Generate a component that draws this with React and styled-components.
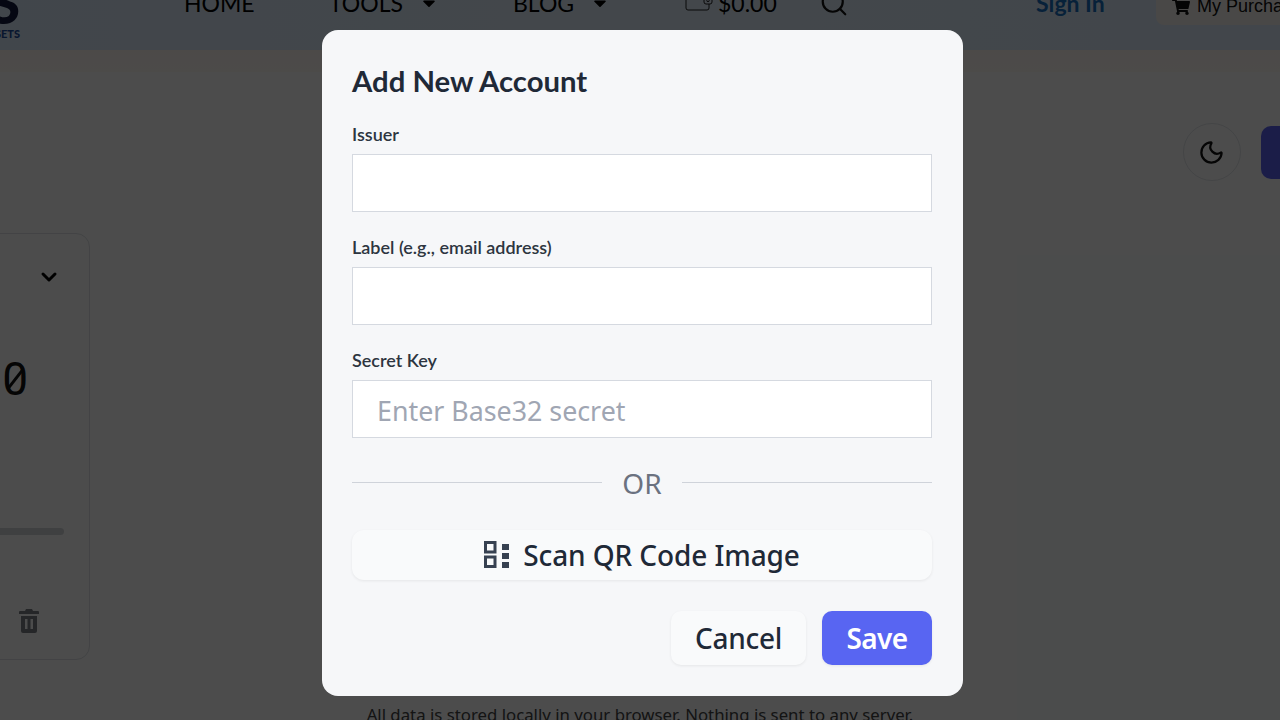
import React from "react";
import styled, { createGlobalStyle } from "styled-components";
import { Moon, Search, ChevronDown } from "lucide-react";
import { FaCaretDown, FaShoppingCart } from "react-icons/fa";

const GlobalStyle = createGlobalStyle`
  html, body {
    margin: 0;
    padding: 0;
    height: 100%;
    overflow: hidden;
  }
`;

const Page = styled.div`
  position: relative;
  width: 1280px;
  height: 720px;
  overflow: hidden;
  background: #ffffff;
  font-family: Lato, "Liberation Sans", sans-serif;
`;

const Header = styled.header`
  display: flex;
  align-items: flex-start;
  height: 50px;
  background: linear-gradient(90deg, #dbeafa, #e0effb 50%, #dcebfa);
`;

const Logo = styled.div`
  display: flex;
  flex-direction: column;
  align-items: flex-end;
  width: 20px;
  margin-top: -22px;
  font-weight: 900;
  color: #111a3c;
`;

const LogoLetter = styled.span`
  font-size: 56px;
  line-height: 50px;
`;

const LogoSub = styled.span`
  font-size: 11px;
  line-height: 12px;
  margin-top: 0;
  color: #1d4e9e;
  white-space: nowrap;
`;

const Nav = styled.nav`
  display: flex;
  align-items: center;
  margin: -10px 0 0 164px;
  height: 26px;
`;

const NavLink = styled.a`
  display: flex;
  align-items: center;
  gap: 16px;
  width: ${(p) => p.$width}px;
  font-size: 23px;
  line-height: 26px;
  color: #000;
`;

const Wallet = styled.div`
  display: flex;
  align-items: center;
  gap: 5px;
  width: 134px;
  font-size: 23px;
  line-height: 26px;
  color: #000;
`;

const SignIn = styled.a`
  flex: none;
  width: 120px;
  margin: -10px 0 0 187px;
  font-size: 23px;
  line-height: 26px;
  font-weight: 700;
  color: #1a6fc0;
  white-space: nowrap;
`;

const Purchases = styled.a`
  display: flex;
  align-items: center;
  gap: 7px;
  flex: none;
  width: 160px;
  height: 25px;
  padding: 0 0 12px 16px;
  box-sizing: border-box;
  border-radius: 0 0 0 8px;
  background: #f3f1ee;
  font-family: "Liberation Sans", sans-serif;
  font-size: 18px;
  color: #111;
  white-space: nowrap;
`;

const Strip = styled.div`
  height: 22px;
  background: linear-gradient(#fdf8f2, #fffaf5);
`;

const Main = styled.main`
  display: flex;
  flex-direction: column;
  background: #fdfeff;

  & > * {
    flex: none;
  }
`;

const Toolbar = styled.div`
  display: flex;
  align-items: center;
  gap: 20px;
  justify-content: flex-end;
  height: 60px;
  margin: 50px -81px 0 0;
`;

const ThemeButton = styled.button`
  display: flex;
  align-items: center;
  justify-content: center;
  width: 58px;
  height: 58px;
  padding: 0 2px 0 0;
  border: 1px solid #e4e6ea;
  border-radius: 50%;
  background: #fff;
  color: #111;
`;

const AddButton = styled.button`
  width: 100px;
  height: 53px;
  border: 0;
  border-radius: 10px;
  background: #5b63f0;
`;

const Card = styled.section`
  display: flex;
  flex-direction: column;
  align-items: flex-end;
  width: 121px;
  height: 427px;
  margin: 51px 0 0 -31px;
  padding: 31px 25px 0 0;
  box-sizing: border-box;
  border: 1px solid #dfe2e6;
  border-radius: 14px;
  background: #fff;
`;

const Chevron = styled(ChevronDown)`
  width: 24px;
  height: 24px;
  margin-right: 3px;
  color: #000;
`;

const Code = styled.div`
  position: relative;
  margin: 67px 36px 0 0;
  font-family: Roboto, sans-serif;
  font-size: 46px;
  line-height: 46px;
  color: #111;

  &::after {
    content: "";
    position: absolute;
    left: 1px;
    top: 22px;
    width: 24px;
    height: 2.5px;
    background: #111;
    transform: rotate(-52deg);
  }
`;

const Progress = styled.div`
  align-self: stretch;
  height: 7px;
  margin-top: 126px;
  border-radius: 4px;
  background: #d4d6d9;
`;

const TrashSvg = styled.svg`
  width: 20px;
  height: 24px;
  margin: 74px 25px 0 0;
  fill: #7d8087;
`;

const Note = styled.p`
  margin: 45px 0 0;
  text-align: center;
  font-family: "Noto Sans", sans-serif;
  font-size: 16.8px;
  line-height: 20px;
  color: #444;
`;

const Overlay = styled.div`
  position: absolute;
  inset: 0;
  display: flex;
  justify-content: center;
  align-items: flex-start;
  padding: 30px 0 0 5px;
  box-sizing: border-box;
  background: rgba(0, 0, 0, 0.7);
`;

const Modal = styled.div`
  width: 641px;
  height: 666px;
  padding: 30px 31px 30px 30px;
  box-sizing: border-box;
  border-radius: 16px;
  background: #f6f7f9;
`;

const Title = styled.h2`
  margin: 0;
  font-size: 29.3px;
  line-height: 42px;
  font-weight: 700;
  color: #1f2937;
`;

const Field = styled.div`
  display: flex;
  flex-direction: column;
  margin-top: ${(p) => p.$top}px;
`;

const Label = styled.label`
  font-size: 18px;
  line-height: 24px;
  font-weight: 600;
  color: #2d3540;
  margin-bottom: 8px;
`;

const Input = styled.input`
  height: 58px;
  padding: 2px 24px 0;
  box-sizing: border-box;
  border: 1px solid #d5d9e0;
  background: #fff;
  font-family: "Noto Sans", sans-serif;
  font-size: 26.8px;
  outline: none;

  &::placeholder {
    color: #a0a6b3;
  }
`;

const Divider = styled.div`
  display: flex;
  align-items: center;
  gap: 20px;
  margin-top: 26px;
  font-family: "Noto Sans", sans-serif;
  font-size: 28px;
  line-height: 38px;
  color: #6b7280;

  &::before,
  &::after {
    content: "";
    flex: 1;
    height: 1px;
    background: #cfd3da;
    transform: translateY(-1px);
  }
`;

const ScanButton = styled.button`
  display: flex;
  align-items: center;
  justify-content: center;
  gap: 13px;
  width: 100%;
  height: 50px;
  margin-top: 28px;
  padding: 0;
  border: 0;
  border-radius: 12px;
  background: #f9fafb;
  box-shadow: 0 1px 3px rgba(0, 0, 0, 0.07);
  font-family: "Noto Sans", sans-serif;
  font-size: 28px;
  font-weight: 500;
  letter-spacing: -0.1px;
  color: #1f2937;
`;

const Actions = styled.div`
  display: flex;
  justify-content: flex-end;
  gap: 16px;
  margin-top: 31px;
`;

const ActionButton = styled.button`
  width: ${(p) => p.$width}px;
  height: 54px;
  padding: 0;
  border: 0;
  border-radius: 10px;
  background: ${(p) => (p.$primary ? "#5865f2" : "#f9fafb")};
  box-shadow: 0 1px 3px rgba(0, 0, 0, 0.07);
  font-family: "Noto Sans", sans-serif;
  font-size: 28px;
  font-weight: ${(p) => (p.$primary ? 600 : 500)};
  letter-spacing: ${(p) => (p.$primary ? "-0.6px" : "-0.3px")};
  color: ${(p) => (p.$primary ? "#fff" : "#1f2937")};
`;

function QrIcon() {
  return (
    <svg width="26" height="28" viewBox="0 0 26 28" fill="none">
      <rect x="1.5" y="1.5" width="9.5" height="9.5" stroke="#374151" strokeWidth="3" />
      <rect x="1.5" y="16" width="9.5" height="9.5" stroke="#374151" strokeWidth="3" />
      <rect x="18" y="3" width="7" height="6" fill="#374151" />
      <rect x="18" y="12" width="7" height="6" fill="#374151" />
      <rect x="18" y="21" width="7" height="6" fill="#374151" />
    </svg>
  );
}

function WalletIcon() {
  return (
    <svg width="28" height="16" viewBox="0 0 28 16" fill="none" stroke="#222" strokeWidth="1">
      <path d="M1 0v13a2 2 0 0 0 2 2h19a2 2 0 0 0 2-2V0" />
      <rect x="19" y="2" width="8" height="7" rx="2" fill="#e2eefb" />
      <circle cx="23" cy="5.5" r="1.2" />
    </svg>
  );
}

function TrashIcon() {
  return (
    <TrashSvg viewBox="0 0 20 24">
      <path d="M7 0h6l1 2h5a1 1 0 0 1 1 1v2H0V3a1 1 0 0 1 1-1h5z" />
      <path
        fillRule="evenodd"
        d="M2 7h16v15a2 2 0 0 1-2 2H4a2 2 0 0 1-2-2zm4 3v10h2.5V10zm5.5 0v10H14V10z"
      />
    </TrashSvg>
  );
}

export default function App() {
  return (
    <Page>
      <GlobalStyle />
      <Header>
        <Logo>
          <LogoLetter>S</LogoLetter>
          <LogoSub>ASSETS</LogoSub>
        </Logo>
        <Nav>
          <NavLink $width={145}>HOME</NavLink>
          <NavLink $width={184}>
            TOOLS <FaCaretDown size={20} />
          </NavLink>
          <NavLink $width={172}>
            BLOG <FaCaretDown size={20} />
          </NavLink>
          <Wallet>
            <WalletIcon />
            $0.00
          </Wallet>
          <Search size={30} strokeWidth={1.75} color="#111" />
        </Nav>
        <SignIn>Sign In</SignIn>
        <Purchases>
          <FaShoppingCart size={18} />
          My Purchases
        </Purchases>
      </Header>
      <Strip />
      <Main>
        <Toolbar>
          <ThemeButton>
            <Moon size={27} strokeWidth={2} />
          </ThemeButton>
          <AddButton />
        </Toolbar>
        <Card>
          <Chevron strokeWidth={3} />
          <Code>0</Code>
          <Progress />
          <TrashIcon />
        </Card>
        <Note>All data is stored locally in your browser. Nothing is sent to any server.</Note>
      </Main>
      <Overlay>
        <Modal>
          <Title>Add New Account</Title>
          <Field $top={20}>
            <Label>Issuer</Label>
            <Input />
          </Field>
          <Field $top={23}>
            <Label>Label (e.g., email address)</Label>
            <Input />
          </Field>
          <Field $top={23}>
            <Label>Secret Key</Label>
            <Input placeholder="Enter Base32 secret" />
          </Field>
          <Divider>OR</Divider>
          <ScanButton>
            <QrIcon />
            Scan QR Code Image
          </ScanButton>
          <Actions>
            <ActionButton $width={135}>Cancel</ActionButton>
            <ActionButton $width={110} $primary>
              Save
            </ActionButton>
          </Actions>
        </Modal>
      </Overlay>
    </Page>
  );
}
